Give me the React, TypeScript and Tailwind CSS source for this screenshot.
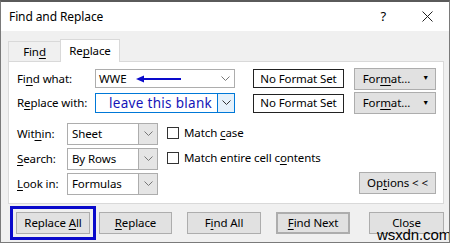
import { ReactNode } from 'react';

const U = ({ children }: { children: ReactNode }) => <span className="underline underline-offset-2">{children}</span>;

function Chevron({ color = '#555' }: { color?: string }) {
  return (
    <svg width="9" height="6" viewBox="0 0 9 6">
      <path d="M0.5 0.5 L4.5 4.5 L8.5 0.5" fill="none" stroke={color} strokeWidth="1" />
    </svg>
  );
}

function Select({ value }: { value: string }) {
  return (
    <div className="w-[91px] h-[22px] border border-[#adadad] flex bg-white">
      <div className="flex-1 pl-[4px] flex items-center">{value}</div>
      <div className="w-[19px] bg-[#e5e5e5] border-l border-[#adadad] flex items-center justify-center">
        <Chevron color="#777" />
      </div>
    </div>
  );
}

function Button({ children, className = '' }: { children: ReactNode; className?: string }) {
  return (
    <div className={`h-[22px] bg-[#e1e1e1] border border-[#adadad] flex items-center justify-center whitespace-nowrap ${className}`}>
      {children}
    </div>
  );
}

function FormatButton() {
  return (
    <Button className="ml-[10px] w-[82px] h-[17px] justify-end pr-[6px] gap-[12px]">
      <span>For<U>m</U>at...</span>
      <span className="text-[7px]">▼</span>
    </Button>
  );
}

export default function App() {
  return (
    <div
      className="w-[450px] h-[243px] bg-[#f0f0f0] border border-[#7a7a7a] border-t-2 border-t-[#5a5a5a] text-[11.5px] tracking-[-0.1px] text-black relative overflow-hidden"
      style={{ fontFamily: '"Noto Sans", "Open Sans", sans-serif' }}
    >
      {/* title bar */}
      <div className="h-[29px] bg-white flex items-center pl-[8px]">
        <span className="text-[12px]">Find and Replace</span>
        <span className="ml-auto mr-[36px] text-[13px]">?</span>
        <svg width="11" height="11" viewBox="0 0 11 11" className="mr-[16px]">
          <path d="M0.5 0.5 L10.5 10.5 M10.5 0.5 L0.5 10.5" stroke="#222" strokeWidth="1" />
        </svg>
      </div>

      {/* tabs */}
      <div className="flex items-end pl-[7px] h-[30px]">
        <div className="w-[53px] h-[20px] border border-[#d9d9d9] border-b-0 bg-[#f0f0f0] flex items-center justify-center">
          <span>Fin<U>d</U></span>
        </div>
        <div className="w-[60px] h-[23px] border border-[#d9d9d9] border-b-0 bg-white flex items-center justify-center -ml-px relative top-px z-10">
          <span>Re<U>p</U>lace</span>
        </div>
      </div>

      {/* panel */}
      <div className="ml-[7px] w-[436px] h-[143px] bg-white border border-[#d9d9d9] pl-[8px] pt-[7px]">
        <div className="flex items-center h-[19px]">
          <div className="w-[78px]">Fi<U>n</U>d what:</div>
          <div className="w-[140px] h-[19px] border border-[#adadad] flex">
            <div className="flex-1 pl-[3px] flex items-center gap-[10px]">
              <span>WWE</span>
              <svg width="46" height="8" viewBox="0 0 46 8">
                <path d="M0 4 L8 0.5 L8 7.5 Z" fill="#0a0acb" />
                <path d="M6 4 H45" stroke="#0a0acb" strokeWidth="2" />
              </svg>
            </div>
            <div className="w-[17px] flex items-center justify-center">
              <Chevron color="#777" />
            </div>
          </div>
          <div className="ml-[18px] w-[91px] h-[19px] border border-[#222] flex items-center justify-center whitespace-nowrap">No Format Set</div>
          <FormatButton />
        </div>

        <div className="flex items-center h-[20px] mt-[5px]">
          <div className="w-[78px]">R<U>e</U>place with:</div>
          <div className="w-[140px] h-[20px] border border-[#0078d7] flex">
            <div className="flex-1 pl-[13px] flex items-center text-[13.5px] tracking-[0.3px] whitespace-nowrap text-[#1414b8]">leave this blank</div>
            <div className="w-[17px] bg-[#e5f1fb] border-l border-[#0078d7] flex items-center justify-center">
              <Chevron color="#333" />
            </div>
          </div>
          <div className="ml-[18px] w-[91px] h-[19px] border border-[#222] flex items-center justify-center whitespace-nowrap">No Format Set</div>
          <FormatButton />
        </div>

        <div className="flex mt-[10px]">
          <div className="flex flex-col gap-[3px]">
            <div className="flex items-center">
              <div className="w-[50px]">Wit<U>h</U>in:</div>
              <Select value="Sheet" />
            </div>
            <div className="flex items-center">
              <div className="w-[50px]"><U>S</U>earch:</div>
              <Select value="By Rows" />
            </div>
            <div className="flex items-center">
              <div className="w-[50px]"><U>L</U>ook in:</div>
              <Select value="Formulas" />
            </div>
          </div>
          <div className="ml-[9px] flex flex-col gap-[8px] pt-px">
            <div className="flex items-center gap-[5px]">
              <div className="w-[12px] h-[12px] border border-[#333]" />
              <span>Match <U>c</U>ase</span>
            </div>
            <div className="flex items-center gap-[5px]">
              <div className="w-[12px] h-[12px] border border-[#333]" />
              <span>Match entire cell c<U>o</U>ntents</span>
            </div>
          </div>
          <div className="ml-auto mr-[7px] self-end mb-[1px]">
            <Button className="w-[77px] h-[21px]">
              <span>Op<U>t</U>ions &lt; &lt;</span>
            </Button>
          </div>
        </div>
      </div>

      {/* bottom buttons */}
      <div className="flex items-center pl-[9px] mt-[2px]">
        <div className="border-[3px] border-[#0a0acb] px-[3px] py-[3px]">
          <Button className="w-[74px]"><span>Replace <U>A</U>ll</span></Button>
        </div>
        <Button className="ml-[3px] w-[73px]"><span><U>R</U>eplace</span></Button>
        <Button className="ml-[15px] w-[74px]"><span>F<U>i</U>nd All</span></Button>
        <Button className="ml-[15px] w-[74px] border-[#0078d7] border-2"><span><U>F</U>ind Next</span></Button>
        <Button className="ml-[19px] w-[75px]"><span>Close</span></Button>
      </div>

      <div className="absolute left-[376px] top-[225px] text-[15px] text-black leading-none" style={{ fontFamily: '"Liberation Sans", sans-serif' }}>
        wsxdn.com
      </div>
    </div>
  );
}
